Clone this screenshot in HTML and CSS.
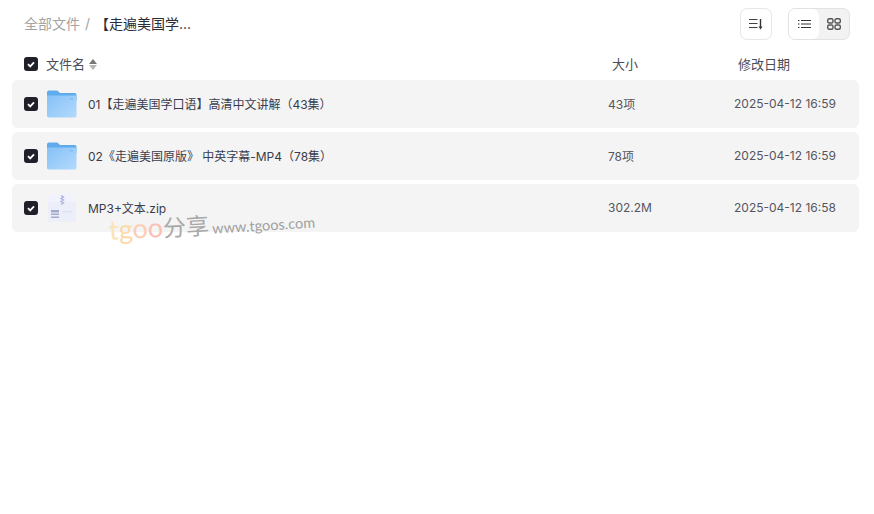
FILE: index.html
```html
<!DOCTYPE html>
<html lang="zh-CN">
<head>
  <meta charset="UTF-8">
  <title>全部文件</title>
  <link rel="stylesheet" href="styles.css">
</head>
<body>
  <svg class="defs" width="0" height="0">
    <defs>
      <linearGradient id="folder-face" x1="0" y1="0" x2="1" y2="1">
        <stop offset="0" stop-color="#86c1f7"/>
        <stop offset="1" stop-color="#b3dafc"/>
      </linearGradient>
    </defs>
    <symbol id="folder" viewBox="0 0 30 28">
      <path d="M0 2.500C0 1.200.9.400 2 .4h7.600c.8 0 1.400.4 1.900 1L13 3H27.500C28.800 3 29.500 3.800 29.500 5v6H0z" fill="#5fabec"/>
      <path d="M0 5.500h29.500v20.300c0 1-.7 1.700-1.700 1.700H1.700C.7 27.500 0 26.800 0 25.800z" fill="url(#folder-face)"/>
      <path d="M22.500 8h3.500v1.500h-3.500z" fill="#7fbcf2"/>
    </symbol>
    <symbol id="check" viewBox="0 0 14 14">
      <path d="M4 7.200l2.200 2.200L10 5.300" fill="none" stroke="#fff" stroke-width="1.800"/>
    </symbol>
  </svg>

  <div class="toolbar">
    <div class="crumbs">
      <span class="crumb-root">全部文件</span>
      <span class="crumb-sep">/</span>
      <span class="crumb-current">【走遍美国学...</span>
    </div>
    <div class="tools">
      <button class="tool-btn" type="button">
        <svg width="14" height="12" viewBox="0 0 14 12"><path d="M0 1.500h8.500M0 5.500h8.500M0 9.500h8.500" fill="none" stroke="#444" stroke-width="1.200"/><path d="M11.500 1v8" fill="none" stroke="#333" stroke-width="1.400"/><path d="M9.500 8.500h4L11.500 11.500z" fill="#333"/></svg>
      </button>
      <div class="view-switch">
        <span class="view-item active">
          <svg width="13" height="10" viewBox="0 0 13 10"><path d="M3 1.500h10M3 5h10M3 8.500h10M0 1.500h1.500M0 5h1.500M0 8.500h1.500" fill="none" stroke="#333" stroke-width="1.200"/></svg>
        </span>
        <span class="view-item">
          <svg width="14" height="12" viewBox="0 0 14 12"><rect x=".7" y=".7" width="5.300" height="4.300" rx="1.500"/><rect x="8" y=".7" width="5.300" height="4.300" rx="1.500"/><rect x=".7" y="7" width="5.300" height="4.300" rx="1.500"/><rect x="8" y="7" width="5.300" height="4.300" rx="1.500"/></svg>
        </span>
      </div>
    </div>
  </div>

  <div class="list-head">
    <div class="col-name">
      <span class="box"><svg width="14" height="14"><use href="#check"/></svg></span>
      <span class="label">文件名</span>
      <span class="sort-arrows"><i class="up"></i><i class="down"></i></span>
    </div>
    <div class="head-size label">大小</div>
    <div class="head-date label">修改日期</div>
  </div>

  <div class="rows">
    <div class="row">
      <span class="box"><svg width="14" height="14"><use href="#check"/></svg></span>
      <svg class="file-icon" width="30" height="28"><use href="#folder"/></svg>
      <span class="file-name">01【走遍美国学口语】高清中文讲解（43集）</span>
      <span class="file-size">43项</span>
      <span class="file-date">2025-04-12 16:59</span>
    </div>
    <div class="row">
      <span class="box"><svg width="14" height="14"><use href="#check"/></svg></span>
      <svg class="file-icon" width="30" height="28"><use href="#folder"/></svg>
      <span class="file-name">02《走遍美国原版》 中英字幕-MP4（78集）</span>
      <span class="file-size">78项</span>
      <span class="file-date">2025-04-12 16:59</span>
    </div>
    <div class="row">
      <span class="box"><svg width="14" height="14"><use href="#check"/></svg></span>
      <svg class="file-icon" width="30" height="30" viewBox="0 0 30 30">
        <path d="M4 1h21l4 8v18c0 1-.7 1.700-1.700 1.700H2.700C1.700 28.700 1 28 1 27V6z" fill="#eceef9"/>
        <path d="M4 1h21l4 8H1z" fill="#f1f2fb"/>
        <path d="M14 2.500l2.500 1.500-2.500 1.500 2.500 1.500-2.500 1.500 2.500 1.500-2.500 1.500" fill="none" stroke="#a9b1d8" stroke-width="1.300"/>
        <path d="M4 17h8v2.500H4zM4 20.500h8V22H4zM4 23.500h8V25H4z" fill="#a4abc9"/>
        <path d="M15 18h10v1.500H15z" fill="#e0e3f2"/>
      </svg>
      <span class="file-name">MP3+文本.zip</span>
      <span class="file-size">302.2M</span>
      <span class="file-date">2025-04-12 16:58</span>
    </div>
  </div>

  <div class="watermark">
    <span class="wm-logo"><span class="c1">t</span><span class="c2">g</span><span class="c3">o</span><span class="c4">o</span></span><span class="wm-cn">分享</span><span class="wm-url">www.tgoos.com</span>
  </div>
</body>
</html>
```

FILE: styles.css
```css
* {
  box-sizing: border-box;
}
body {
  margin: 0;
  background: #fff;
  color: #3b3d4a;
  font-family: "Inter", "Noto Sans CJK SC", sans-serif;
  font-size: 12px;
  position: relative;
  min-height: 514px;
}
.defs {
  display: block;
  height: 0;
}
.toolbar {
  height: 48px;
  padding: 8px 24px;
  display: flex;
  align-items: center;
  justify-content: space-between;
}
.crumbs {
  display: flex;
  align-items: center;
  font-size: 14px;
  padding-bottom: 2px;
}
.crumb-root {
  color: #a3a3a3;
}
.crumb-sep {
  color: #a3a3a3;
  margin: 0 5px;
}
.crumb-current {
  color: #2a2c38;
}
.tools {
  display: flex;
  gap: 16px;
}
.tool-btn {
  width: 32px;
  height: 32px;
  padding: 0;
  background: #fff;
  border: 1px solid #e6e6e6;
  border-radius: 7px;
  display: flex;
  align-items: center;
  justify-content: center;
}
.view-switch {
  width: 62px;
  height: 32px;
  display: flex;
  background: #f2f2f2;
  border: 1px solid #e2e2e2;
  border-radius: 7px;
  overflow: hidden;
}
.view-item {
  flex: 1;
  display: flex;
  align-items: center;
  justify-content: center;
}
.view-item rect {
  fill: none;
  stroke: #555;
  stroke-width: 1.400;
}
.view-item.active {
  background: #fff;
  border-radius: 0 7px 7px 0;
}
.list-head {
  height: 32px;
  padding-left: 24px;
  display: flex;
  align-items: center;
  font-size: 13px;
  color: #4a4c58;
}
.label {
  padding-bottom: 2px;
}
.col-name {
  width: 588px;
  display: flex;
  align-items: center;
  gap: 8px;
}
.sort-arrows {
  display: flex;
  flex-direction: column;
  gap: 1px;
  margin-left: -4px;
}
.sort-arrows i {
  display: block;
  width: 0;
  height: 0;
  border-left: 4px solid transparent;
  border-right: 4px solid transparent;
}
.sort-arrows .up {
  border-bottom: 5px solid #777;
}
.sort-arrows .down {
  border-top: 5px solid #b5b5b5;
}
.head-size {
  width: 126px;
}
.box {
  width: 14px;
  height: 14px;
  flex: none;
  background: #1f2029;
  border-radius: 3px;
  display: block;
}
.box svg {
  display: block;
}
.rows {
  margin: 0 15px 0 12px;
  display: flex;
  flex-direction: column;
  gap: 4px;
}
.row {
  height: 48px;
  padding-left: 12px;
  background: #f4f4f4;
  border-radius: 6px;
  display: flex;
  align-items: center;
}
.file-icon {
  flex: none;
  margin-left: 9px;
}
.file-name,
.file-size,
.file-date {
  padding-bottom: 1px;
}
.file-name {
  margin-left: 11px;
  width: 520px;
  color: #3a3c4c;
}
.file-size {
  width: 126px;
  color: #55565f;
}
.file-date {
  color: #55565f;
}
.watermark {
  position: absolute;
  left: 110px;
  top: 213px;
  display: flex;
  align-items: baseline;
  transform: rotate(-3.500deg);
  transform-origin: left bottom;
  white-space: nowrap;
}
.wm-logo {
  font-family: "Lato", sans-serif;
  font-size: 27px;
  line-height: 32px;
}
.c1 {
  color: #fbe3b4;
}
.c2 {
  color: #fcd9a8;
}
.c3 {
  color: #fdcdb4;
}
.c4 {
  color: #fcc0b4;
}
.wm-cn {
  font-size: 23px;
  color: #a9a9a9;
}
.wm-url {
  font-family: "Lato", sans-serif;
  font-size: 14.500px;
  color: #a0a0a0;
  margin-left: 3px;
}
```
